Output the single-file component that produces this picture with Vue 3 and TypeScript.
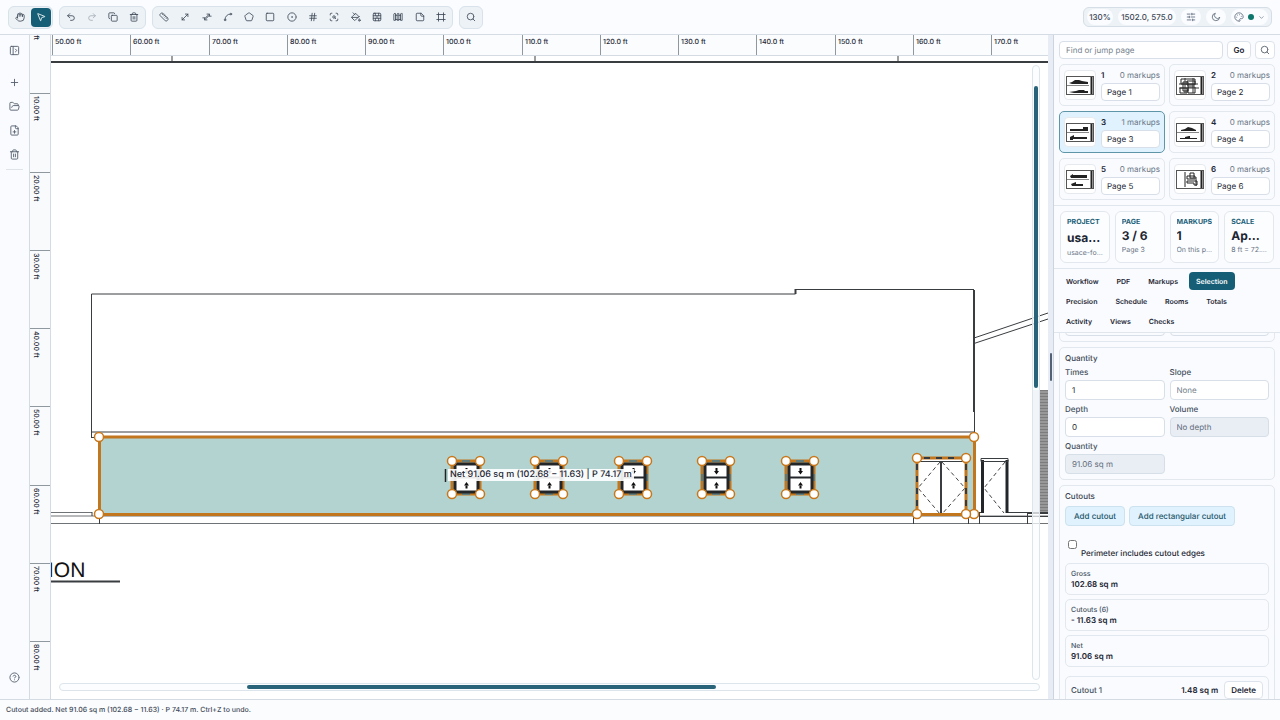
<script setup lang="ts">
import { ref } from 'vue'

type Glyph = string[]

const icons: Record<string, Glyph> = {
  hand: ['M18 11V6a2 2 0 0 0-4 0', 'M14 10V4a2 2 0 0 0-4 0v2', 'M10 10.5V6a2 2 0 0 0-4 0v8', 'M18 8a2 2 0 1 1 4 0v6a8 8 0 0 1-8 8h-2c-2.8 0-4.5-.86-6-2.34l-3.6-3.6a2 2 0 0 1 2.83-2.82L7 15'],
  pointer: ['M4 4.7a.5.5 0 0 1 .7-.7l16 6.5a.5.5 0 0 1-.1 1l-6.1 1.6a2 2 0 0 0-1.4 1.4l-1.6 6.1a.5.5 0 0 1-1 .1z'],
  undo: ['M9 14 4 9l5-5', 'M4 9h10.5a5.5 5.5 0 0 1 0 11H11'],
  redo: ['m15 14 5-5-5-5', 'M20 9H9.5a5.5 5.5 0 0 0 0 11H13'],
  copy: ['M10 8h10a2 2 0 0 1 2 2v10a2 2 0 0 1-2 2H10a2 2 0 0 1-2-2V10a2 2 0 0 1 2-2z', 'M4 16a2 2 0 0 1-2-2V4a2 2 0 0 1 2-2h10a2 2 0 0 1 2 2'],
  trash: ['M10 11v6', 'M14 11v6', 'M19 6v14a2 2 0 0 1-2 2H7a2 2 0 0 1-2-2V6', 'M3 6h18', 'M8 6V4a2 2 0 0 1 2-2h4a2 2 0 0 1 2 2v2'],
  ruler: ['M21.3 15.3a2.4 2.4 0 0 1 0 3.4l-2.6 2.6a2.4 2.4 0 0 1-3.4 0L2.7 8.7a2.4 2.4 0 0 1 0-3.4l2.6-2.6a2.4 2.4 0 0 1 3.4 0Z', 'm14.5 12.5 2-2', 'm11.5 9.5 2-2', 'm8.5 6.5 2-2', 'm17.5 15.5 2-2'],
  diagonal: ['M11 19H5v-6', 'M13 5h6v6', 'M19 5 5 19'],
  polyline: ['M2 14h6l9-8', 'M22 10h-6l-9 8', 'M12 5h6v4', 'M12 19H6v-4'],
  spline: ['M21 5a2 2 0 1 1-4 0 2 2 0 0 1 4 0', 'M7 19a2 2 0 1 1-4 0 2 2 0 0 1 4 0', 'M5 17A12 12 0 0 1 17 5'],
  pentagon: ['M10.8 2.4a2 2 0 0 1 2.4 0l8 5.7a2 2 0 0 1 .7 2.3l-3 9.2a2 2 0 0 1-2 1.4H7a2 2 0 0 1-1.9-1.4l-3-9.2a2 2 0 0 1 .7-2.3z'],
  square: ['M5 3h14a2 2 0 0 1 2 2v14a2 2 0 0 1-2 2H5a2 2 0 0 1-2-2V5a2 2 0 0 1 2-2z'],
  circleDot: ['M22 12a10 10 0 1 1-20 0 10 10 0 0 1 20 0', 'M13 12a1 1 0 1 1-2 0 1 1 0 0 1 2 0'],
  hash: ['M4 9h16', 'M4 15h16', 'M10 3 8 21', 'M16 3l-2 18'],
  scan: ['M3 7V5a2 2 0 0 1 2-2h2', 'M17 3h2a2 2 0 0 1 2 2v2', 'M21 17v2a2 2 0 0 1-2 2h-2', 'M7 21H5a2 2 0 0 1-2-2v-2', 'M15 12a3 3 0 1 1-6 0 3 3 0 0 1 6 0', 'm16 16-1.9-1.9'],
  bucket: ['m19 11-8-8-8.6 8.6a2 2 0 0 0 0 2.8l5.2 5.2a2 2 0 0 0 2.8 0L19 11Z', 'm5 2 5 5', 'M2 13h15', 'M22 20a2 2 0 1 1-4 0c0-1.6 1.7-2.4 2-4 .3 1.6 2 2.4 2 4Z'],
  brick: ['M5 3h14a2 2 0 0 1 2 2v14a2 2 0 0 1-2 2H5a2 2 0 0 1-2-2V5a2 2 0 0 1 2-2z', 'M12 9v6', 'M16 15v6', 'M16 3v6', 'M3 15h18', 'M3 9h18', 'M8 15v6', 'M8 3v6'],
  fence: ['M4 3 2 5v15h4V5Z', 'M6 8h4', 'M6 18h4', 'm12 3-2 2v15h4V5Z', 'M14 8h4', 'M14 18h4', 'm20 3-2 2v15h4V5Z'],
  note: ['M14 3H5a2 2 0 0 0-2 2v14a2 2 0 0 0 2 2h14a2 2 0 0 0 2-2V10z', 'M14 3v5a2 2 0 0 0 2 2h5'],
  frame: ['M22 6H2', 'M22 18H2', 'M6 2v20', 'M18 2v20'],
  search: ['M19 11a8 8 0 1 1-16 0 8 8 0 0 1 16 0', 'm21 21-4.3-4.3'],
  sliders: ['M21 5h-7', 'M10 5H3', 'M21 12h-9', 'M8 12H3', 'M21 19h-5', 'M12 19H3', 'M14 3v4', 'M8 10v4', 'M16 17v4'],
  moon: ['M20.9 13.5A9 9 0 1 1 10.5 3a7 7 0 0 0 10.4 10.5'],
  palette: ['M12 22a10 10 0 1 1 10-10c0 3-2 4-4 4h-2.5a2 2 0 0 0-1.5 3.3A1.7 1.7 0 0 1 12 22', 'M13.5 6.5h.01', 'M17.5 10.5h.01', 'M6.5 12.5h.01', 'M8.5 7.5h.01'],
  chevron: ['m6 9 6 6 6-6'],
  panel: ['M5 3h14a2 2 0 0 1 2 2v14a2 2 0 0 1-2 2H5a2 2 0 0 1-2-2V5a2 2 0 0 1 2-2z', 'M9 3v18', 'm14 9 3 3-3 3'],
  plus: ['M5 12h14', 'M12 5v14'],
  folder: ['m6 14 1.5-2.9A2 2 0 0 1 9.2 10H20a2 2 0 0 1 2 2.5l-1.5 6a2 2 0 0 1-2 1.5H4a2 2 0 0 1-2-2V5a2 2 0 0 1 2-2h4a2 2 0 0 1 1.7.9l.8 1.2a2 2 0 0 0 1.7.9H18a2 2 0 0 1 2 2v2'],
  filePlus: ['M15 2H6a2 2 0 0 0-2 2v16a2 2 0 0 0 2 2h12a2 2 0 0 0 2-2V7Z', 'M14 2v4a2 2 0 0 0 2 2h4', 'M9 15h6', 'M12 12v6'],
  help: ['M22 12a10 10 0 1 1-20 0 10 10 0 0 1 20 0', 'M9.1 9a3 3 0 0 1 5.8 1c0 2-3 3-3 3', 'M12 17h.01']
}

const toolGroups = [
  { name: 'mode', tools: ['hand', 'pointer'] },
  { name: 'edit', tools: ['undo', 'redo', 'copy', 'trash'] },
  { name: 'draw', tools: ['ruler', 'diagonal', 'polyline', 'spline', 'pentagon', 'square', 'circleDot', 'hash', 'scan', 'bucket', 'brick', 'fence', 'note', 'frame'] },
  { name: 'lookup', tools: ['search'] }
]

const railTools = ['plus', 'folder', 'filePlus', 'trash']

const TICK = 78.25
const topTicks = Array.from({ length: 13 }, (_, i) => {
  const feet = 50 + i * 10
  return { x: Math.round(1 + i * TICK), label: `${feet.toFixed(feet < 100 ? 2 : 1)} ft` }
})
const sideTicks = Array.from({ length: 9 }, (_, i) => ({
  y: Math.round(-20 + i * TICK),
  label: `${(i * 10).toFixed(2)} ft`
}))

const windows = [452, 535, 619, 702, 786]
const gridTicks = [172, 535, 898]

interface Page { id: number; markups: number; art: string[] }
const pages = ref<Page[]>([
  { id: 1, markups: 0, art: ['M3 7l3-1 3-2h4l3 1 6 1v2H6z', 'M3 16l7-1 3-1h5l1 1h3v2H8z'] },
  { id: 2, markups: 0, art: ['M5 3h14v5H5z', 'M7 6h5v9H7z', 'M11 5h8v4h-8z', 'M12 11h7v6h-7z', 'M4 12h7v5H4z'] },
  { id: 3, markups: 1, art: ['M4 6h13V4h5v4H4z', 'M4 14l4-2v2h13v2H7v1H4z'] },
  { id: 4, markups: 0, art: ['M5 7l4-1 3-2 4 1 4 2v1H5z', 'M4 15h5v-1l4-1h1v2h7v1H4z'] },
  { id: 5, markups: 0, art: ['M4 6l3-2v1h14v3H5z', 'M5 14l5-2v2h7v2H6z'] },
  { id: 6, markups: 0, art: ['M9 2v15', 'M11 6h8v3h-8z', 'M11 11h10v4h-3v-2h-7z', 'M14 3h4v5h-4z', 'M20 7v9'] }
])
const current = ref(3)

const stats = [
  { label: 'PROJECT', value: 'usace-f', note: 'usace-fort-plans' },
  { label: 'PAGE', value: '3 / 6', note: 'Page 3' },
  { label: 'MARKUPS', value: '1', note: 'On this page' },
  { label: 'SCALE', value: 'Applied', note: '8 ft = 72.00' }
]

const tabs = ['Workflow', 'PDF', 'Markups', 'Selection', 'Precision', 'Schedule', 'Rooms', 'Totals', 'Activity', 'Views', 'Checks']
const tab = ref('Selection')

const totals = [
  { label: 'Gross', value: '102.68 sq m' },
  { label: 'Cutouts (6)', value: '- 11.63 sq m' },
  { label: 'Net', value: '91.06 sq m' }
]
</script>

<template>
  <div class="app">
    <header class="topbar">
      <div v-for="g in toolGroups" :key="g.name" class="group" :class="g.name">
        <button v-for="t in g.tools" :key="t" type="button" class="tool" :class="{ on: t === 'pointer', off: t === 'redo' }" :aria-label="t">
          <svg class="icon" viewBox="0 0 24 24"><path v-for="d in icons[t]" :key="d" :d="d" /></svg>
        </button>
      </div>
      <div class="readout">
        <span class="chip zoom">130%</span>
        <span class="chip coords">1502.0, 575.0</span>
        <button type="button" class="chip round" aria-label="Settings">
          <svg class="icon" viewBox="0 0 24 24"><path v-for="d in icons.sliders" :key="d" :d="d" /></svg>
        </button>
        <button type="button" class="chip round" aria-label="Dark mode">
          <svg class="icon" viewBox="0 0 24 24"><path v-for="d in icons.moon" :key="d" :d="d" /></svg>
        </button>
        <button type="button" class="chip theme" aria-label="Theme colour">
          <svg class="icon" viewBox="0 0 24 24"><path v-for="d in icons.palette" :key="d" :d="d" /></svg>
          <i class="dot"></i>
          <svg class="icon small" viewBox="0 0 24 24"><path :d="icons.chevron[0]" /></svg>
        </button>
      </div>
    </header>

    <main class="body">
      <nav class="rail">
        <button type="button" class="railbtn first" aria-label="Expand panel">
          <svg class="icon" viewBox="0 0 24 24"><path v-for="d in icons.panel" :key="d" :d="d" /></svg>
        </button>
        <button v-for="t in railTools" :key="t" type="button" class="railbtn" :aria-label="t">
          <svg class="icon" viewBox="0 0 24 24"><path v-for="d in icons[t]" :key="d" :d="d" /></svg>
        </button>
        <hr class="railrule" />
        <button type="button" class="railbtn help" aria-label="Help">
          <svg class="icon" viewBox="0 0 24 24"><path v-for="d in icons.help" :key="d" :d="d" /></svg>
        </button>
      </nav>

      <svg class="sideruler">
        <g v-for="t in sideTicks" :key="t.label" :transform="`translate(0 ${t.y})`">
          <path class="tick" d="M0 .5h22" />
          <text class="rulertext" transform="translate(4 3) rotate(90)">{{ t.label }}</text>
        </g>
      </svg>

      <section class="stage">
        <svg class="drawing">
          <defs>
            <pattern id="siding" width="8" height="3" patternUnits="userSpaceOnUse">
              <rect width="8" height="3" fill="#989898" />
              <rect width="8" height="1" fill="#7c7c7c" />
            </pattern>
          </defs>
          <g transform="translate(-51 -35)">
            <path class="ink heavy" d="M51 62H1049" />
            <path v-for="x in gridTicks" :key="x" class="ink" :d="`M${x} 55v7`" />
            <path class="ink" d="M91.5 437V294H795.5V289.5H974" />
            <path class="ink heavy" d="M795.5 289v5M974 290V412" />
            <path class="ink" d="M974.5 412V437M91 432H974M91 437.5h8" />
            <path class="ink" d="M974 338L1048 313M974 343.5L1048 319" />
            <rect x="1033" y="390" width="7" height="123" fill="#dcdedf" />
            <rect x="1040" y="390" width="9" height="123" fill="url(#siding)" />
            <path class="ink faint" d="M51 512.5H92M51 516H1049M51 523.5H1049" />
            <path class="ink" d="M92 512v4M99.5 515v9M913.5 516v8M968.5 516v8M979.5 512v12M1027.5 512v12M979 512.5H1049M979 516.5H1049" />
            <path class="ink heavy" d="M1027 513H1049" />
            <path class="wall" d="M99.5 437H974.5V514.5H99.5Z" />

            <g v-for="x in windows" :key="x" :transform="`translate(${x} 461)`">
              <rect class="cut" width="28" height="33" />
              <path class="cutdash" d="M10 0h8M10 33h8M0 13v7M28 13v7" />
              <rect x="3" y="3" width="23" height="28" rx="1" fill="#fff" stroke="#222629" stroke-width="3" />
              <path d="M3 16.5h23" stroke="#222629" stroke-width="2" />
              <path d="M14.5 7v3.5M14.5 24.5v3" stroke="#111" stroke-width="2" />
              <path d="M12 10h5l-2.5 3.5zM12 24.5h5l-2.5-3.5z" fill="#111" />
            </g>

            <rect x="917" y="459" width="49" height="56" fill="#fff" />
            <path class="ink" d="M917 461.5h49" />
            <path class="ink heavy" d="M941 461v53" />
            <path class="swing" d="M940 462L918 488L940 514M942 462L965 488L942 514" />
            <rect class="cut" x="917" y="458" width="49" height="56.5" />
            <path class="doordash" d="M917 464v46M966 464v46M924 458h36" />
            <rect x="982" y="459" width="26" height="54" fill="#fff" />
            <path class="frame" d="M982.5 513V460M1007 513V460" />
            <path class="ink" d="M981 458.5h27v3h-27z" />
            <path class="swing" d="M1005 462L984 488L1004 513" />

            <g v-for="x in windows" :key="`h${x}`">
              <circle v-for="p in [[x, 461], [x + 28, 461], [x, 494], [x + 28, 494]]" :key="p.join()" class="handle" :cx="p[0]" :cy="p[1]" r="4.5" />
            </g>
            <circle v-for="p in [[99, 437], [974, 437], [99, 514], [974, 514], [917, 458], [966, 458], [917, 514], [966, 514]]" :key="p.join()" class="handle" :cx="p[0]" :cy="p[1]" r="4.5" />

            <path d="M445.5 469v13" stroke="#222" stroke-width="1.5" />
            <text class="title" x="48" y="577">ION</text>
            <path class="ink heavy" d="M51 581.5H120" />
          </g>
        </svg>
        <svg class="topruler">
          <g v-for="t in topTicks" :key="t.label" :transform="`translate(${t.x} 0)`">
            <path class="tick" d="M.5 0v21" />
            <text class="rulertext" x="3" y="9">{{ t.label }}</text>
          </g>
        </svg>
        <div class="measure">Net 91.06 sq m (102.68 − 11.63) | P 74.17 m</div>
        <div class="track vertical"><i class="thumb"></i></div>
        <div class="track horizontal"><i class="thumb"></i></div>
      </section>

      <div class="splitter"><i class="grip"></i></div>

      <aside class="side">
        <div class="find">
          <input type="text" class="field" placeholder="Find or jump page" aria-label="Find or jump page" />
          <button type="button" class="btn go">Go</button>
          <button type="button" class="btn lens" aria-label="Search">
            <svg class="icon" viewBox="0 0 24 24"><path v-for="d in icons.search" :key="d" :d="d" /></svg>
          </button>
        </div>
        <div class="pages">
          <article v-for="p in pages" :key="p.id" class="page" :class="{ current: p.id === current }" @click="current = p.id">
            <div class="thumbbox">
              <svg class="sheet" viewBox="0 0 28 19">
                <rect x="0.5" y="0.5" width="27" height="18" fill="#fff" stroke="#555" />
                <path d="M25.5 1v17" stroke="#222" stroke-width="2" />
                <path v-if="p.id !== 2 && p.id !== 6" d="M1 9.5h22" stroke="#888" stroke-width="1" />
                <path v-for="d in p.art" :key="d" :d="d" class="plan" :class="{ outline: p.id === 2 || p.id === 6 }" />
                <path v-if="p.id === 2" d="M3 12h20M9 2v15M17 2v15M3 8h19" stroke="#333" stroke-width="1" />
              </svg>
            </div>
            <div class="pagehead"><b>{{ p.id }}</b><span>{{ p.markups }} markups</span></div>
            <input type="text" class="field" :value="`Page ${p.id}`" :aria-label="`Name of page ${p.id}`" />
          </article>
        </div>
        <div class="stats">
          <div v-for="s in stats" :key="s.label" class="stat">
            <span class="statlabel">{{ s.label }}</span>
            <strong>{{ s.value }}</strong>
            <small>{{ s.note }}</small>
          </div>
        </div>
        <div class="tabs">
          <button v-for="t in tabs" :key="t" type="button" class="tab" :class="{ active: t === tab }" @click="tab = t">{{ t }}</button>
        </div>
        <div class="panel">
          <section class="card previous"><div class="grid"><i class="stub"></i><i class="stub"></i></div></section>
          <section class="card">
            <h3>Quantity</h3>
            <div class="grid">
              <label>Times<input type="text" class="field" value="1" /></label>
              <label>Slope<input type="text" class="field" placeholder="None" /></label>
              <label>Depth<input type="text" class="field" value="0" /></label>
              <label>Volume<input type="text" class="field" value="No depth" disabled /></label>
              <label>Quantity<input type="text" class="field" value="91.06 sq m" disabled /></label>
            </div>
          </section>
          <section class="card">
            <h3>Cutouts</h3>
            <div class="actions">
              <button type="button" class="soft">Add cutout</button>
              <button type="button" class="soft">Add rectangular cutout</button>
            </div>
            <label class="check"><input type="checkbox" /><span>Perimeter includes cutout edges</span></label>
            <div v-for="t in totals" :key="t.label" class="total">
              <span>{{ t.label }}</span>
              <b>{{ t.value }}</b>
            </div>
            <div class="cutrow">
              <span>Cutout 1</span>
              <b>1.48 sq m</b>
              <button type="button" class="btn">Delete</button>
            </div>
          </section>
        </div>
      </aside>
    </main>

    <footer class="status">Cutout added. Net 91.06 sq m (102.68 − 11.63) · P 74.17 m. Ctrl+Z to undo.</footer>
  </div>
</template>

<style>
body {
  margin: 0;
}
</style>

<style scoped>
.app,
.app * {
  box-sizing: border-box;
}
.app {
  display: flex;
  flex-direction: column;
  height: 100vh;
  overflow: hidden;
  background: #fafcfe;
  color: #1d2633;
  font-family: Inter, 'Liberation Sans', sans-serif;
  font-size: 8px;
  font-weight: 500;
  text-rendering: geometricPrecision;
}
button,
input {
  font: inherit;
  color: inherit;
  margin: 0;
  text-rendering: inherit;
}
button {
  display: flex;
  align-items: center;
  justify-content: center;
  padding: 0;
  border: 0;
  background: none;
}
.icon {
  width: 10px;
  height: 10px;
  fill: none;
  stroke: currentColor;
  stroke-width: 2;
  stroke-linecap: round;
  stroke-linejoin: round;
}

.topbar {
  display: flex;
  align-items: center;
  flex: none;
  gap: 6px;
  height: 35px;
  padding: 0 8px;
  border-bottom: 1px solid #d5dce3;
  background: #fafcff;
}
.group {
  display: flex;
  align-items: center;
  justify-content: space-between;
  height: 23px;
  padding: 1px;
  border: 1px solid #d8e2ea;
  border-radius: 6px;
  background: #edf2f7;
}
.mode { width: 45px; }
.edit { width: 87px; }
.draw { width: 301px; }
.lookup { width: 24px; }
.tool {
  width: 20px;
  height: 19px;
  border-radius: 4px;
  color: #3d4856;
}
.tool.on {
  background: #155e75;
  color: #fff;
}
.tool.off {
  opacity: 0.4;
}
.readout {
  display: flex;
  align-items: center;
  gap: 5px;
  height: 20px;
  margin-left: auto;
  padding: 0 3px;
  border: 1px solid #d5dee6;
  border-radius: 6px;
  background: #edf2f7;
}
.chip {
  display: flex;
  align-items: center;
  justify-content: center;
  height: 16px;
  border-radius: 8px;
  background: #fafcff;
  color: #3c4654;
}
.zoom { width: 26px; }
.coords { width: 58px; }
.round { width: 20px; color: #5c6878; }
.theme { width: 37px; gap: 4px; color: #5c6878; }
.dot {
  width: 6px;
  height: 6px;
  border-radius: 50%;
  background: #0f766e;
}
.icon.small {
  width: 7px;
  height: 7px;
}

.body {
  display: flex;
  flex: 1;
  min-height: 0;
}
.rail {
  display: flex;
  flex-direction: column;
  align-items: center;
  flex: none;
  width: 29px;
  padding: 5px 0 12px;
  background: #f9fbfe;
  color: #566170;
}
.railbtn {
  width: 20px;
  height: 20px;
  margin-bottom: 4px;
}
.railbtn .icon {
  width: 11px;
  height: 11px;
}
.railbtn.first {
  margin-bottom: 12px;
}
.railrule {
  width: 17px;
  margin: 1px 0;
  border: 0;
  border-top: 1px solid #dfe4ea;
}
.railbtn.help {
  margin: auto 0 0;
}
.sideruler {
  flex: none;
  width: 22px;
  height: 100%;
  border: solid #d5dbe2;
  border-width: 0 1px;
  background: #f8fafc;
}
.tick {
  stroke: #8f979f;
}
.rulertext {
  font-size: 7px;
  font-weight: 500;
  fill: #1d2633;
}
.stage {
  position: relative;
  flex: 1;
  min-width: 0;
  overflow: hidden;
  background: #fff;
}
.drawing,
.topruler {
  position: absolute;
  top: 0;
  left: 0;
  width: 100%;
  height: 100%;
}
.topruler {
  height: 21px;
  border-bottom: 1px solid #d5dbe2;
  background: #fafcfe;
}
.ink {
  fill: none;
  stroke: #3a3d40;
  stroke-width: 1;
}
.heavy {
  stroke-width: 2;
}
.faint {
  stroke: #6f7376;
}
.wall {
  fill: #b2d3cf;
  stroke: #c2771e;
  stroke-width: 3;
}
.cut,
.cutdash,
.doordash {
  fill: none;
  stroke: #c2771e;
  stroke-width: 3;
}
.cutdash {
  stroke: #607b7c;
  stroke-width: 2;
}
.doordash {
  stroke: #333b40;
  stroke-width: 2;
  stroke-dasharray: 6 6;
}
.swing {
  fill: none;
  stroke: #444;
  stroke-dasharray: 4 3;
}
.frame {
  stroke: #222629;
  stroke-width: 3;
}
.handle {
  fill: #fff;
  stroke: #c9771a;
  stroke-width: 1.5;
}
.title {
  font-family: 'Liberation Sans', sans-serif;
  font-size: 21px;
  font-weight: 400;
  fill: #111;
}
.measure {
  position: absolute;
  top: 434px;
  left: 397px;
  padding: 0 2px;
  background: rgba(255, 255, 255, 0.9);
  font-size: 9px;
  line-height: 12px;
  white-space: nowrap;
}
.track {
  position: absolute;
  padding: 1px;
  border: 1px solid #dce5eb;
  border-radius: 5px;
  background: rgba(250, 252, 255, 0.75);
}
.track .thumb {
  display: block;
  border-radius: 2px;
  background: #29647a;
}
.track.vertical {
  top: 30px;
  right: 8px;
  bottom: 19px;
  width: 8px;
  padding: 20px 1px 0;
}
.vertical .thumb {
  height: 51%;
}
.track.horizontal {
  right: 8px;
  bottom: 8px;
  left: 8px;
  height: 8px;
}
.horizontal .thumb {
  width: 48%;
  height: 4px;
  margin-left: 19%;
}
.splitter {
  display: flex;
  align-items: center;
  justify-content: center;
  flex: none;
  width: 6px;
  border-right: 1px solid #ccd5df;
  background: #e8edf5;
}
.grip {
  width: 2px;
  height: 28px;
  border-radius: 1px;
  background: #536177;
}

.side {
  display: flex;
  flex-direction: column;
  flex: none;
  width: 226px;
  min-height: 0;
  background: #f9fbfe;
}
.field {
  width: 100%;
  min-width: 0;
  height: 20px;
  padding: 0 6px;
  border: 1px solid #d8dfe8;
  border-radius: 4px;
  outline: 0;
  background: #fff;
  font-weight: 400;
}
.field::placeholder {
  color: #757f8c;
}
.field:disabled {
  border-color: #d6dee8;
  background: #e9eef5;
  color: #5f6b7a;
}
.find {
  display: flex;
  gap: 4px;
  padding: 6px 5px 5px 5px;
}
.find .field {
  flex: 1;
  height: 18px;
}
.btn {
  flex: none;
  height: 18px;
  padding: 0 6px;
  border: 1px solid #dde3ea;
  border-radius: 4px;
  background: #fff;
  font-weight: 600;
}
.go { width: 24px; }
.lens { width: 20px; padding: 0; color: #4b5563; }
.pages {
  display: grid;
  grid-template-columns: 1fr 1fr;
  gap: 5px 4px;
  padding: 0 5px 5px;
  border-bottom: 1px solid #e1e6ec;
}
.page {
  display: grid;
  grid-template-columns: 32px 1fr;
  grid-template-rows: 12px 18px;
  column-gap: 5px;
  row-gap: 2px;
  padding: 4px;
  border: 1px solid #e3e8ee;
  border-radius: 5px;
}
.page.current {
  border-color: #5e96a8;
  background: #e0f2fe;
}
.thumbbox {
  display: flex;
  align-items: center;
  justify-content: center;
  grid-row: 1 / 3;
  height: 30px;
  margin-top: 1px;
  border: 1px solid #e6eaef;
  border-radius: 4px;
  background: #fff;
}
.sheet {
  width: 28px;
  height: 19px;
}
.plan {
  fill: #222;
}
.plan.outline {
  fill: none;
  stroke: #222;
}
.pagehead {
  display: flex;
  justify-content: space-between;
  align-items: center;
}
.pagehead span {
  color: #687484;
  font-weight: 400;
}
.page .field {
  height: 18px;
  padding: 0 5px;
}
.stats {
  display: grid;
  grid-template-columns: repeat(4, minmax(0, 1fr));
  gap: 5px;
  padding: 5px 6px;
  border-bottom: 1px solid #e1e6ec;
}
.stat {
  height: 52px;
  padding: 5px 6px;
  border: 1px solid #e3e8ee;
  border-radius: 6px;
  background: #fcfdff;
  white-space: nowrap;
}
.stat > * {
  display: block;
  overflow: hidden;
  text-overflow: ellipsis;
}
.statlabel {
  color: #1b6077;
  font-size: 7px;
  font-weight: 700;
  line-height: 10px;
}
.stat strong {
  font-size: 12px;
  font-weight: 700;
  line-height: 18px;
}
.stat:first-child strong {
  line-height: 21px;
}
.stat small {
  color: #687484;
  font-size: 7px;
  font-weight: 400;
  line-height: 10px;
}
.tabs {
  display: flex;
  flex-wrap: wrap;
  gap: 2px 4px;
  padding: 3px 5px 2px;
  border-bottom: 1px solid #e1e6ec;
}
.tab {
  height: 18px;
  padding: 0 7px;
  border-radius: 4px;
  font-size: 7px;
  font-weight: 600;
}
.tab.active {
  background: #155e75;
  color: #fff;
}
.panel {
  display: flex;
  flex-direction: column;
  flex: 1;
  gap: 5px;
  min-height: 0;
  padding: 0 5px;
  overflow: hidden;
}
.card {
  flex: none;
  padding: 5px;
  border: 1px solid #e3e8ee;
  border-radius: 5px;
}
.card.previous {
  margin-top: -23px;
}
.stub {
  display: block;
  height: 20px;
  border: 1px solid #d8dfe8;
  border-radius: 4px;
}
h3 {
  margin: 0;
  color: #3c4654;
  font-size: 8px;
  font-weight: 500;
  line-height: 10px;
}
.grid {
  display: grid;
  grid-template-columns: 1fr 1fr;
  gap: 4px 5px;
}
.card h3 + .grid {
  margin-top: 4px;
}
.grid label {
  display: flex;
  flex-direction: column;
  gap: 2px;
  color: #465160;
  line-height: 11px;
}
.grid .field {
  color: #1d2633;
}
.grid .field:disabled {
  color: #5f6b7a;
}
.actions {
  display: flex;
  gap: 4px;
  margin-top: 5px;
}
.soft {
  height: 20px;
  padding: 0 8px;
  border: 1px solid #cce2ee;
  border-radius: 4px;
  background: #e0f2fe;
  color: #1d5568;
}
.check {
  display: flex;
  gap: 4px;
  height: 33px;
  padding: 13px 0 0 3px;
}
.check input {
  width: 9px;
  height: 9px;
  margin: 1px 0 0;
}
.check span {
  padding-top: 9px;
}
.total {
  height: 32px;
  margin-top: 4px;
  padding: 5px;
  border: 1px solid #e3e8ee;
  border-radius: 5px;
  line-height: 11px;
}
.total span,
.cutrow span {
  display: block;
  color: #465160;
}
.total span {
  font-size: 7px;
  line-height: 10px;
}
b {
  font-weight: 600;
}
.cutrow {
  display: flex;
  align-items: center;
  gap: 6px;
  margin-top: 9px;
  padding: 4px 5px;
  border: 1px solid #e3e8ee;
  border-radius: 5px;
}
.cutrow span {
  flex: 1;
}
.status {
  flex: none;
  height: 21px;
  padding: 0 6px;
  border-top: 1px solid #d5dbe2;
  background: #fafcfe;
  color: #3f4957;
  font-size: 7px;
  line-height: 20px;
}
</style>
